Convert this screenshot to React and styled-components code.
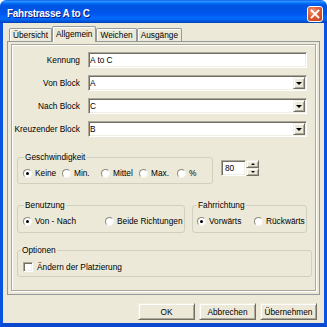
import React from "react";
import styled, { createGlobalStyle } from "styled-components";

const GlobalStyle = createGlobalStyle`
  html, body {
    margin: 0;
    padding: 0;
    background: #ffffff;
  }
  body {
    font-family: "Liberation Sans", Arial, sans-serif;
    font-size: 8.3px;
    color: #000;
  }
`;

const tabs = ["Übersicht", "Allgemein", "Weichen", "Ausgänge"];

const fields = [
  { label: "Kennung", value: "A to C", combo: false },
  { label: "Von Block", value: "A", combo: true },
  { label: "Nach Block", value: "C", combo: true },
  { label: "Kreuzender Block", value: "B", combo: true },
];

const speeds = [
  { name: "Keine", w: 39, checked: true },
  { name: "Min.", w: 39 },
  { name: "Mittel", w: 38 },
  { name: "Max.", w: 38 },
  { name: "%", w: 20 },
];

const App = () => {
  return (
    <>
      <GlobalStyle />
      <Window>
        <TitleBar>
          <Title>Fahrstrasse A to C</Title>
          <CloseButton>
            <svg width="14" height="14" viewBox="0 0 14 14">
              <path d="M3.5 3.5 L10.5 10.5 M10.5 3.5 L3.5 10.5" stroke="#fff" strokeWidth="1.8" strokeLinecap="square" />
            </svg>
          </CloseButton>
        </TitleBar>

        <Frame>
          <TabStrip>
            {tabs.map((t) => (
              <Tab key={t} $active={t === "Allgemein"}>{t}</Tab>
            ))}
          </TabStrip>

          <Panel>
            <Page>
              <FormGrid>
                {fields.map((f) => (
                  <React.Fragment key={f.label}>
                    <Label>{f.label}</Label>
                    <Field>
                      <FieldText>{f.value}</FieldText>
                      {f.combo && (
                        <ComboButton>
                          <ArrowDown />
                        </ComboButton>
                      )}
                    </Field>
                  </React.Fragment>
                ))}
              </FormGrid>

              <SpeedRow>
                <GroupBox $w={196} $padL={5} $padTop={6} $padBottom={5}>
                  <Legend $offset={1}>Geschwindigkeit</Legend>
                  <OptionRow>
                    {speeds.map((s) => (
                      <RadioItem key={s.name} $w={s.w}>
                        <Radio $checked={s.checked} />
                        {s.name}
                      </RadioItem>
                    ))}
                  </OptionRow>
                </GroupBox>

                <Spinner>
                  <SpinField>80</SpinField>
                  <SpinButtons>
                    <SpinButton>
                      <ArrowSmall $up />
                    </SpinButton>
                    <SpinButton>
                      <ArrowSmall />
                    </SpinButton>
                  </SpinButtons>
                </Spinner>
              </SpeedRow>

              <DirectionRow>
                <GroupBox $w={168} $padL={5} $padTop={6} $padBottom={6}>
                  <Legend $offset={1}>Benutzung</Legend>
                  <OptionRow>
                    <RadioItem $w={82}>
                      <Radio $checked />
                      Von - Nach
                    </RadioItem>
                    <RadioItem $w={70}>
                      <Radio />
                      Beide Richtungen
                    </RadioItem>
                  </OptionRow>
                </GroupBox>

                <GroupBox $w={115} $padL={4} $padTop={6} $padBottom={6}>
                  <Legend $offset={0}>Fahrrichtung</Legend>
                  <OptionRow>
                    <RadioItem $w={57}>
                      <Radio $checked />
                      Vorwärts
                    </RadioItem>
                    <RadioItem $w={50}>
                      <Radio />
                      Rückwärts
                    </RadioItem>
                  </OptionRow>
                </GroupBox>
              </DirectionRow>

              <OptionsRow>
                <GroupBox $w={295} $padL={5} $padTop={7} $padBottom={4}>
                  <Legend $offset={-2}>Optionen</Legend>
                  <OptionRow>
                    <CheckItem>
                      <Checkbox />
                      Ändern der Platzierung
                    </CheckItem>
                  </OptionRow>
                </GroupBox>
              </OptionsRow>
            </Page>
          </Panel>

          <ButtonRow>
            <Button>OK</Button>
            <Button>Abbrechen</Button>
            <Button>Übernehmen</Button>
          </ButtonRow>
        </Frame>
      </Window>
    </>
  );
};

export default App;

const Window = styled.div`
  width: 327px;
  height: 327px;
  display: flex;
  flex-direction: column;
  overflow: hidden;
`;

const TitleBar = styled.div`
  height: 23px;
  flex: none;
  box-sizing: border-box;
  display: flex;
  align-items: center;
  justify-content: space-between;
  padding: 4px 4px 0 7px;
  border-radius: 6px 6px 0 0;
  background: linear-gradient(
    to bottom,
    #0058ee 0%,
    #3593ff 5%,
    #288eff 8%,
    #127dff 11%,
    #036ffc 14%,
    #0262ee 18%,
    #0057e5 24%,
    #0054e3 30%,
    #0055eb 56%,
    #005bf5 66%,
    #026afe 76%,
    #0062ef 86%,
    #0052d6 94%,
    #0040ab 100%
  );
`;

const Title = styled.div`
  font-family: "Liberation Sans", Arial, sans-serif;
  font-weight: bold;
  font-size: 10px;
  letter-spacing: -0.3px;
  color: #ffffff;
  text-shadow: 1px 1px 0 #0a1883;
`;

const CloseButton = styled.div`
  width: 16px;
  height: 16px;
  box-sizing: border-box;
  border: 1px solid #ffffff;
  border-radius: 3px;
  display: flex;
  align-items: center;
  justify-content: center;
  background: radial-gradient(circle at 35% 30%, #f09a7c 0%, #e05a32 45%, #c63e1a 100%);
`;

const Frame = styled.div`
  flex: 1;
  display: flex;
  flex-direction: column;
  background: #ece9d8;
  border-left: 3px solid #0a52e0;
  border-right: 3px solid #0a52e0;
  border-bottom: 4px solid #0a48d0;
  padding: 3px 4px 0 4px;
`;

const TabStrip = styled.div`
  height: 16px;
  display: flex;
  align-items: flex-end;
  padding-left: 2px;
  margin-bottom: -1px;
  position: relative;
  z-index: 1;
`;

const Tab = styled.div`
  height: ${(p) => (p.$active ? 16 : 13)}px;
  margin-bottom: ${(p) => (p.$active ? 0 : 1)}px;
  box-sizing: border-box;
  padding: 0 3px ${(p) => (p.$active ? 2 : 0)}px;
  display: flex;
  align-items: center;
  border: 1px solid #919b9c;
  border-bottom: none;
  border-radius: 2px 2px 0 0;
  background: #ece9d8;
  box-shadow: inset 1px 1px 0 #ffffff;
  white-space: nowrap;
`;

const Panel = styled.div`
  height: 254px;
  box-sizing: border-box;
  border: 1px solid #919b9c;
  padding: 2px 3px 3px 3px;
  display: flex;
`;

const Page = styled.div`
  flex: 1;
  border: 1px solid #aca899;
  box-shadow: inset 1px 1px 0 #ffffff, 1px 1px 0 #ffffff;
  display: flex;
  flex-direction: column;
`;

const FormGrid = styled.div`
  display: grid;
  grid-template-columns: 68px 219px;
  grid-auto-rows: 16px;
  column-gap: 8px;
  row-gap: 7px;
  padding-top: 7px;
`;

const Label = styled.div`
  text-align: right;
  line-height: 16px;
  white-space: nowrap;
`;

const sunken = `
  background: #ffffff;
  border: 1px solid;
  border-color: #aca899 #ffffff #ffffff #aca899;
  box-shadow: inset 1px 1px 0 #716f64, inset -1px -1px 0 #f1efe2;
`;

const raised = `
  background: #ece9d8;
  border: 1px solid;
  border-color: #f1efe2 #716f64 #716f64 #f1efe2;
  box-shadow: inset 1px 1px 0 #ffffff, inset -1px -1px 0 #aca899;
`;

const Field = styled.div`
  height: 16px;
  box-sizing: border-box;
  ${sunken}
  display: flex;
  align-items: center;
  padding-left: 1px;
`;

const FieldText = styled.span`
  flex: 1;
`;

const ComboButton = styled.div`
  width: 12px;
  height: 12px;
  box-sizing: border-box;
  margin-right: 1px;
  ${raised}
  display: flex;
  align-items: center;
  justify-content: center;
`;

const ArrowDown = styled.span`
  width: 0;
  height: 0;
  border-left: 3px solid transparent;
  border-right: 3px solid transparent;
  border-top: 3px solid #000000;
`;

const SpeedRow = styled.div`
  display: flex;
  align-items: flex-start;
  gap: 8px;
  margin: 15px 0 0 5px;
`;

const DirectionRow = styled.div`
  display: flex;
  align-items: flex-start;
  gap: 7px;
  margin: 16px 0 0 5px;
`;

const OptionsRow = styled.div`
  display: flex;
  margin: 12px 0 0 5px;
`;

const GroupBox = styled.fieldset`
  margin: 0;
  min-width: 0;
  width: ${(p) => p.$w}px;
  box-sizing: border-box;
  padding: ${(p) => p.$padTop}px 4px ${(p) => p.$padBottom}px ${(p) => p.$padL}px;
  border: 1px solid #d0d0bf;
  border-radius: 3px;
`;

const Legend = styled.legend`
  padding: 0 1px;
  margin-left: ${(p) => p.$offset}px;
  line-height: 10px;
  font-size: 8.3px;
`;

const OptionRow = styled.div`
  display: flex;
  align-items: center;
  height: 10px;
`;

const RadioItem = styled.div`
  display: flex;
  align-items: center;
  gap: 3px;
  width: ${(p) => p.$w}px;
  flex: none;
  white-space: nowrap;
`;

const Radio = styled.span`
  width: 9px;
  height: 9px;
  flex: none;
  box-sizing: border-box;
  border-radius: 50%;
  background: #ffffff;
  border: 1px solid;
  border-color: #8d8a7c #f4f3ee #f4f3ee #8d8a7c;
  display: flex;
  align-items: center;
  justify-content: center;
  &::after {
    content: "";
    width: 3px;
    height: 3px;
    border-radius: 50%;
    background: #000000;
    display: ${(p) => (p.$checked ? "block" : "none")};
  }
`;

const CheckItem = styled.div`
  display: flex;
  align-items: center;
  gap: 4px;
  white-space: nowrap;
`;

const Checkbox = styled.span`
  width: 10px;
  height: 10px;
  box-sizing: border-box;
  ${sunken}
`;

const Spinner = styled.div`
  display: flex;
  margin-top: 8px;
`;

const SpinField = styled.div`
  width: 25px;
  height: 16px;
  box-sizing: border-box;
  ${sunken}
  padding-left: 3px;
  line-height: 14px;
`;

const SpinButtons = styled.div`
  display: flex;
  flex-direction: column;
`;

const SpinButton = styled.div`
  width: 13px;
  height: 8px;
  box-sizing: border-box;
  ${raised}
  display: flex;
  align-items: center;
  justify-content: center;
`;

const ArrowSmall = styled.span`
  width: 0;
  height: 0;
  border-left: 2px solid transparent;
  border-right: 2px solid transparent;
  ${(p) => (p.$up ? "border-bottom: 2px solid #000;" : "border-top: 2px solid #000;")}
`;

const ButtonRow = styled.div`
  display: flex;
  justify-content: flex-end;
  gap: 4px;
  margin-top: 8px;
  padding-right: 3px;
`;

const Button = styled.div`
  width: 57px;
  height: 17px;
  box-sizing: border-box;
  ${raised}
  display: flex;
  align-items: center;
  justify-content: center;
`;
